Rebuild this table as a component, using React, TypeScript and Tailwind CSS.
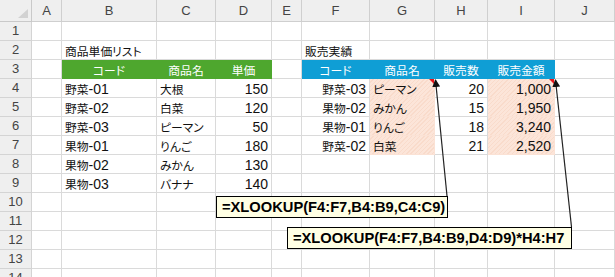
type Fill = 'green' | 'blue' | 'pink';
type Cell = { t?: string; a?: 'l' | 'c' | 'r'; f?: Fill; note?: boolean };

const cols = ['A', 'B', 'C', 'D', 'E', 'F', 'G', 'H', 'I', 'J'];

const L = (t: string): Cell => ({ t });
const R = (t: string): Cell => ({ t, a: 'r' });
const G = (t: string): Cell => ({ t, a: 'c', f: 'green' });
const B = (t: string): Cell => ({ t, a: 'c', f: 'blue' });
const P = (t: string, a: 'l' | 'r' = 'l', note = false): Cell => ({ t, a, f: 'pink', note });

const rows: Record<number, Record<string, Cell>> = {
  2: { B: L('商品単価リスト'), F: L('販売実績') },
  3: {
    B: G('コード'), C: G('商品名'), D: G('単価'),
    F: B('コード'), G: B('商品名'), H: B('販売数'), I: B('販売金額'),
  },
  4: { B: L('野菜-01'), C: L('大根'), D: R('150'), F: R('野菜-03'), G: P('ピーマン', 'l', true), H: R('20'), I: P('1,000', 'r', true) },
  5: { B: L('野菜-02'), C: L('白菜'), D: R('120'), F: R('果物-02'), G: P('みかん'), H: R('15'), I: P('1,950', 'r') },
  6: { B: L('野菜-03'), C: L('ピーマン'), D: R('50'), F: R('果物-01'), G: P('りんご'), H: R('18'), I: P('3,240', 'r') },
  7: { B: L('果物-01'), C: L('りんご'), D: R('180'), F: R('野菜-02'), G: P('白菜'), H: R('21'), I: P('2,520', 'r') },
  8: { B: L('果物-02'), C: L('みかん'), D: R('130') },
  9: { B: L('果物-03'), C: L('バナナ'), D: R('140') },
};

const fills: Record<string, string> = {
  none: 'border-[#dadada]',
  green: 'bg-[#4ea72e] border-[#4ea72e] text-white',
  blue: 'bg-[#0f9ed5] border-[#0f9ed5] text-white',
  pink: 'border-[#fbe2d5] bg-[repeating-linear-gradient(135deg,#fce5d9_0px,#fce5d9_2px,#f9dbcb_2px,#f9dbcb_3px)]',
};

const aligns = { l: 'justify-start', c: 'justify-center', r: 'justify-end' };

function Txt({ s }: { s: string }) {
  const parts = s.match(/[\x20-\x7e]+|[^\x20-\x7e]+/g) ?? [];
  return (
    <>
      {parts.map((p, i) =>
        /^[\x20-\x7e]/.test(p) ? (
          <span key={i} className="font-['Liberation_Sans',sans-serif] text-[14px]">{p}</span>
        ) : (
          <span key={i} className="font-['Noto_Sans_CJK_JP',sans-serif] text-[11.8px] [font-feature-settings:'palt']">{p}</span>
        )
      )}
    </>
  );
}

function SheetCell({ c }: { c?: Cell }) {
  const fill = fills[c?.f ?? 'none'];
  const align = aligns[c?.a ?? 'l'];
  return (
    <div className={`relative flex h-[19px] items-center whitespace-nowrap border-b border-r px-[3px] pt-[1px] leading-none text-[#111] ${fill} ${align}`}>
      {c?.t && <Txt s={c.t} />}
      {c?.note && (
        <span className="absolute right-0 top-0 h-0 w-0 border-l-[5px] border-t-[5px] border-l-transparent border-t-[#e8141a]" />
      )}
    </div>
  );
}

export default function App() {
  return (
    <div className="relative h-[277px] w-[615px] overflow-hidden bg-white">
      <div className="grid grid-cols-[32px_30px_95px_59px_56px_30px_68px_65px_53px_67px_60px] font-['Liberation_Sans',sans-serif]">
        {/* column headers */}
        <div className="relative h-[22px] border-b border-r border-[#c9c9c9] bg-[#efefef]">
          <svg className="absolute bottom-[3px] right-[3px]" width="10" height="9" viewBox="0 0 10 9">
            <polygon points="10,0 10,9 0,9" fill="#d2d2d2" />
          </svg>
        </div>
        {cols.map((c) => (
          <div key={c} className="flex h-[22px] items-center justify-center border-b border-r border-[#cfcfcf] bg-[#efefef] text-[13px] text-[#444]">
            {c}
          </div>
        ))}

        {Array.from({ length: 14 }, (_, i) => i + 1).map((r) => (
          <div key={r} className="contents">
            <div className="flex h-[19px] items-center justify-center border-b border-r border-[#d4d4d4] bg-[#efefef] text-[13px] text-[#444]">
              {r}
            </div>
            {cols.map((c) => (
              <SheetCell key={c} c={rows[r]?.[c]} />
            ))}
          </div>
        ))}
      </div>

      {/* leader lines */}
      <svg className="pointer-events-none absolute inset-0" width="615" height="277">
        <defs>
          <marker id="ah" markerWidth="8" markerHeight="8" refX="7" refY="4" orient="auto" markerUnits="userSpaceOnUse">
            <path d="M0,0 L8,4 L0,8 Z" fill="#111" />
          </marker>
        </defs>
        <line x1="447" y1="196" x2="435.5" y2="80" stroke="#222" strokeWidth="1.2" markerEnd="url(#ah)" />
        <line x1="571.5" y1="227" x2="555.5" y2="80" stroke="#222" strokeWidth="1.2" markerEnd="url(#ah)" />
      </svg>

      {/* formula callouts */}
      <div className="absolute left-[216px] top-[196px] flex h-[22px] w-[232px] items-center border border-black bg-[#ffffe4] pl-[5px] font-['Liberation_Sans',sans-serif] text-[14.7px] font-bold text-black">
        =XLOOKUP(F4:F7,B4:B9,C4:C9)
      </div>
      <div className="absolute left-[287px] top-[227px] flex h-[22px] w-[285px] items-center border border-black bg-[#ffffe4] pl-[5px] font-['Liberation_Sans',sans-serif] text-[14.7px] font-bold text-black">
        =XLOOKUP(F4:F7,B4:B9,D4:D9)*H4:H7
      </div>
    </div>
  );
}
